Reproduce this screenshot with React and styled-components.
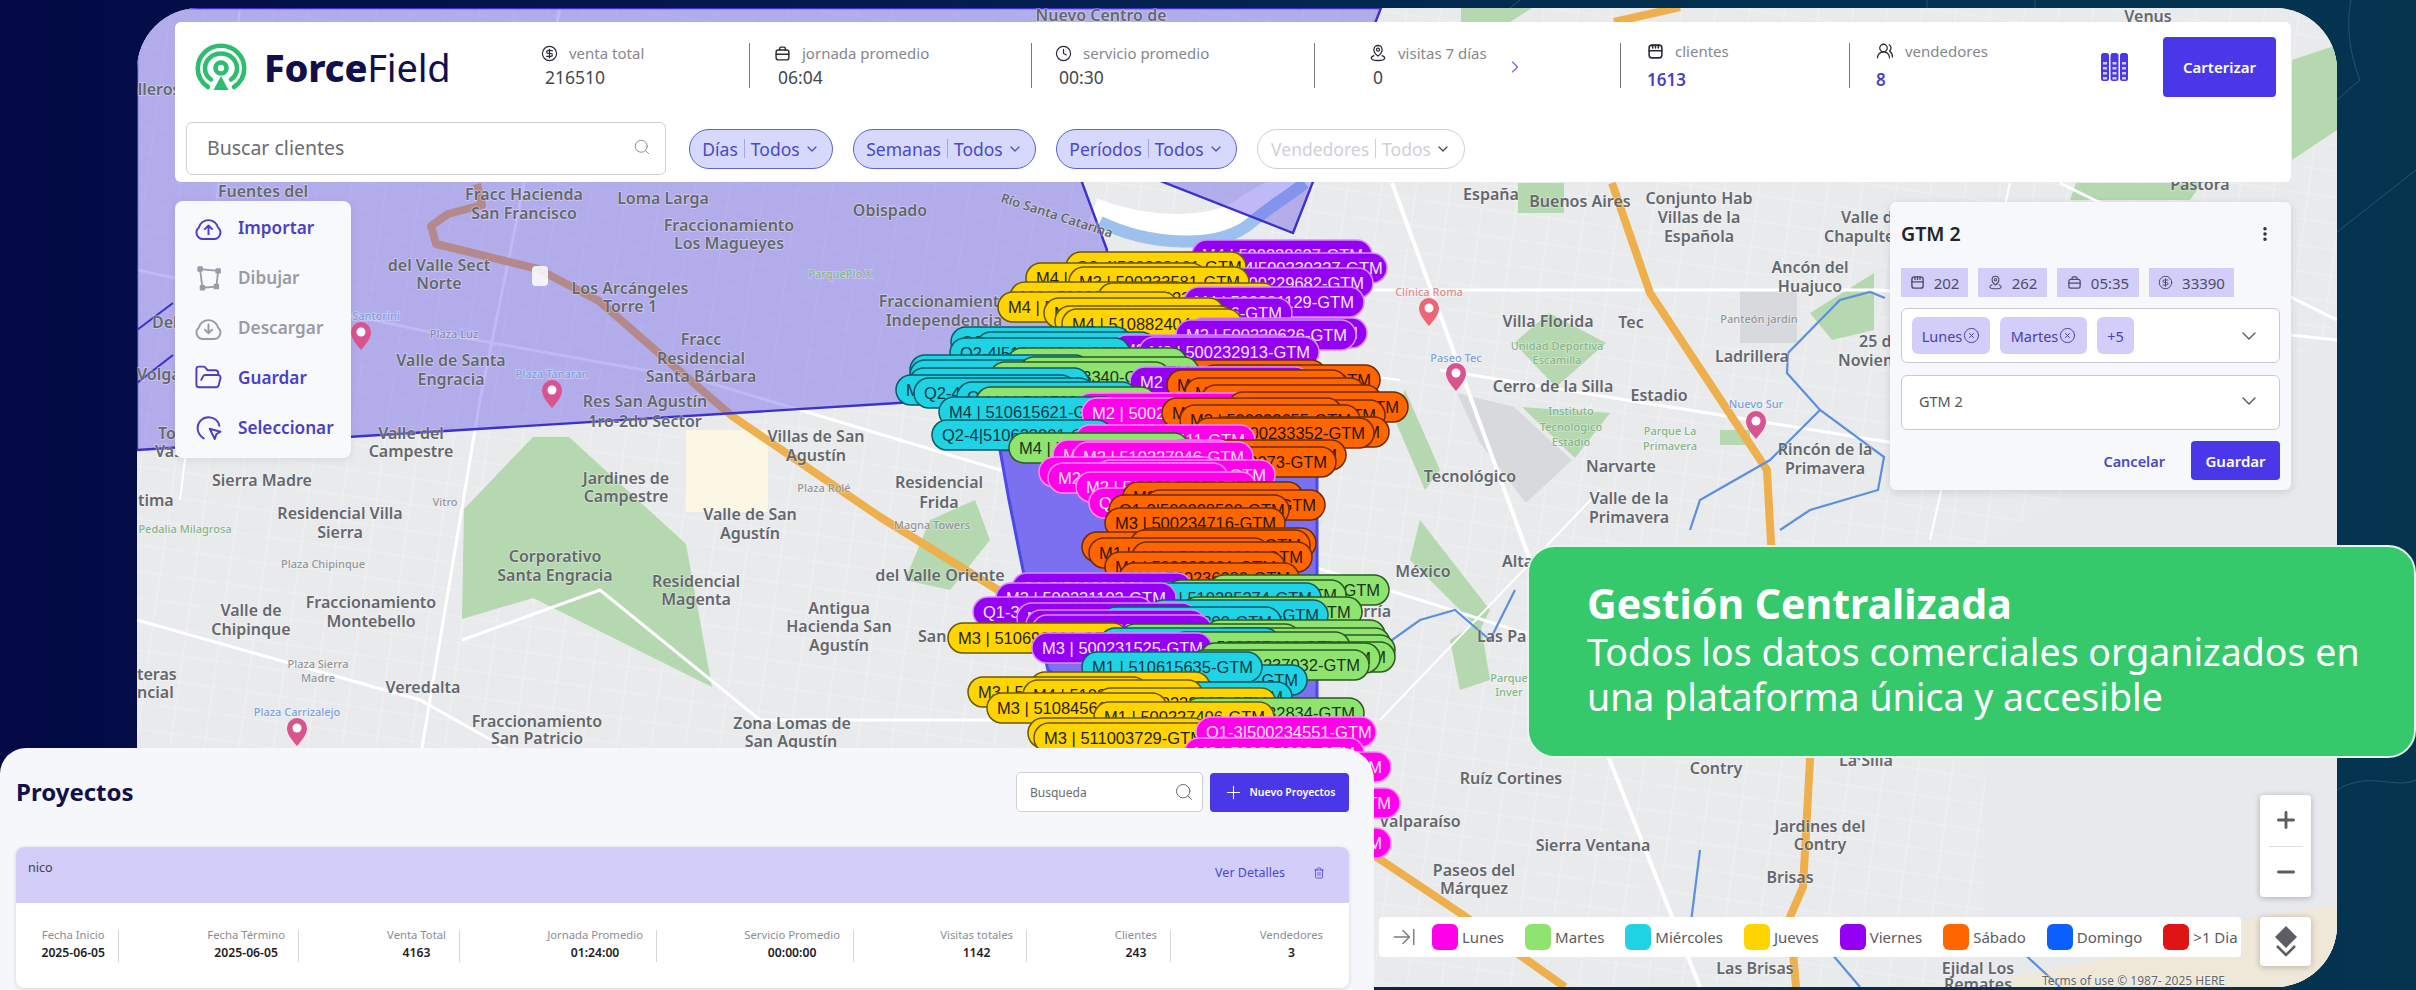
import React from "react";
import styled, { createGlobalStyle } from "styled-components";
import {
  CircleDollarSign, Clock, UsersRound, ChevronDown, ChevronRight, Search, FolderOpen,
  EllipsisVertical, CircleX, Trash2, Plus, Minus, ArrowRightToLine,
} from "lucide-react";

const Global = createGlobalStyle`
  html, body { margin: 0; padding: 0; background: #04244f; }
  body { font-family: "Noto Sans", "Open Sans", sans-serif; }
  * { box-sizing: border-box; }
`;

const VIOLET = "#4a38e8";
const INK = "#12104a";

const Stage = styled.div`
  position: relative; width: 2416px; height: 990px; overflow: hidden;
  background: linear-gradient(90deg, #030a45 0%, #04194f 35%, #03304f 70%, #05344f 100%);
`;
const Deco = styled.svg`position: absolute; inset: 0; width: 2416px; height: 990px;`;
const MapFrame = styled.div`
  position: absolute; left: 137px; top: 8px; width: 2200px; height: 979px;
  border-radius: 62px; overflow: hidden; background: #e9eaec;
`;
const MapSvg = styled.svg`display: block; width: 2200px; height: 979px;`;
const MapLabel = styled.text`
  font-family: "Noto Sans", sans-serif; font-size: ${p => p.$s || 16}px; font-weight: ${p => p.$w || 600};
  fill: ${p => p.$c || "#64676c"}; stroke: rgba(255,255,255,.4); stroke-width: 1.5px; paint-order: stroke;
  text-anchor: ${p => p.$a || "middle"};
`;
const PinText = styled.text`
  font-family: "Liberation Sans", Arial, sans-serif; font-size: 16.5px; fill: ${p => p.$c};
`;

/* header */
const Header = styled.header`
  position: absolute; left: 175px; top: 22px; width: 2116px; height: 160px;
  background: #fff; border-radius: 6px; display: flex; flex-direction: column;
`;
const TopRow = styled.div`display: flex; align-items: flex-start; height: 100px; padding-top: 21px;`;
const LogoBox = styled.div`width: 366px; display: flex; align-items: center; gap: 17px; padding-left: 20px; height: 48px;`;
const LogoText = styled.div`font-size: 38px; line-height: 48px; color: ${INK}; letter-spacing: -0.2px;
  b { font-weight: 800; }`;
const Stat = styled.div`
  width: ${p => p.$w}px; height: 45px; padding-left: ${p => p.$pad}px; position: relative;
  border-left: ${p => p.$first ? "none" : "1.5px solid #77797d"};
`;
const StatLabel = styled.div`
  display: flex; align-items: center; gap: 11px; color: #85878c; font-size: 15px; line-height: 18px;
  margin-top: ${p => p.$accent ? -1 : 1}px; svg { color: #2a2a33; flex: none; }
`;
const StatValue = styled.div`
  font-size: ${p => p.$accent ? 17 : 17.5}px; line-height: 22px; margin-top: ${p => p.$accent ? 9 : 4}px;
  padding-left: ${p => p.$accent ? 0 : 4}px; font-weight: ${p => p.$accent ? 600 : 400};
  color: ${p => p.$accent ? "#4c3fc4" : "#45474c"};
`;
const StatArrow = styled.span`position: absolute; left: 190px; top: 14px; color: #6a68d8; display: flex;`;
const GridBox = styled.div`width: 62px; display: flex; height: 45px; padding-top: 10px;`;
const PrimaryBtn = styled.button`
  border: 0; background: ${VIOLET}; color: #fff; font: 600 ${p => p.$fs || 15}px "Noto Sans", sans-serif; border-radius: 4px;
  width: ${p => p.$w}px; height: ${p => p.$h}px; display: flex; align-items: center; justify-content: center; gap: 5px;
`;
const BtnHolder = styled.div`margin-top: -6px;`;
const BottomRow = styled.div`display: flex; align-items: center; gap: 23px; padding-left: 11px; height: 53px;`;
const SearchBox = styled.div`
  width: 480px; height: 53px; border: 1.5px solid #cfd0d4; border-radius: 6px; background: #fff;
  display: flex; align-items: center; justify-content: space-between; padding: 0 14px 3px 20px;
  color: #6a6c72; font-size: 19.5px; svg { color: #8b8d92; }
`;
const Pills = styled.div`display: flex; gap: 20px;`;
const Pill = styled.div`
  width: ${p => p.$w}px; height: 40px; border-radius: 20px; display: flex; align-items: center; justify-content: center;
  gap: 6px; font-size: 17.5px; border: 1.5px solid ${p => p.$off ? "#cfd0d4" : "#5c5fd8"};
  background: ${p => p.$off ? "#fff" : "#d6d9fc"}; color: ${p => p.$off ? "#cfd0d6" : "#4a48c6"};
  svg { color: ${p => p.$off ? "#44464c" : "#4a48c6"}; margin-left: -2px; }
`;
const Sep = styled.i`width: 1px; height: 19px; background: ${p => p.$off ? "#cfd0d6" : "#a3a5e6"};`;

/* tools */
const Tools = styled.nav`
  position: absolute; left: 175px; top: 201px; width: 176px; height: 257px; padding-top: 2px;
  background: #f8f9fb; border-radius: 8px; box-shadow: 0 2px 8px rgba(0,0,0,.08);
`;
const Tool = styled.div`
  height: 50px; display: flex; align-items: center; gap: 15px; padding-left: 19px; font-size: 17.2px; font-weight: 600;
  color: ${p => p.$off ? "#9a9ba6" : "#4a3fc6"}; padding-bottom: 2px;
`;

/* panel */
const Panel = styled.section`
  position: absolute; left: 1890px; top: 202px; width: 401px; height: 288px; padding: 0 11px;
  background: #f6f8fb; border-radius: 6px; box-shadow: 0 2px 8px rgba(0,0,0,.12);
`;
const PanelHead = styled.div`
  display: flex; align-items: center; justify-content: space-between; height: 66px; padding-bottom: 3px;
  font-size: 19.5px; font-weight: 600; color: #222429; svg { color: #2a2c33; margin-right: 6px; }
`;
const Chips = styled.div`display: flex; gap: 10px;`;
const Chip = styled.div`
  width: ${p => p.$w}px; height: 29px; background: #d3cdf9; display: flex; align-items: center; justify-content: center; gap: 9px;
  font-size: 15px; color: #4c4e68;
`;
const Select = styled.div`
  height: 55px; margin-top: ${p => p.$mt}px; background: #fff; border: 1.5px solid #c9cacf; border-radius: 6px;
  display: flex; align-items: center; justify-content: space-between; padding: 0 18px ${p => p.$pb || 0}px ${p => p.$pl}px;
  font-size: 14.5px; color: #55575e;
`;
const Tags = styled.div`display: flex; gap: 10px;`;
const Tag = styled.div`
  width: ${p => p.$w}px; height: 37px; background: #d3cdf9; border-radius: 6px; display: flex; align-items: center; justify-content: center;
  gap: 1px; font-size: 14.5px; color: #4a42a8;
`;
const PanelFoot = styled.div`display: flex; justify-content: flex-end; align-items: center; gap: 26px; margin-top: 11px;`;
const LinkBtn = styled.span`font-size: 14.5px; font-weight: 600; color: #4a48c6;`;

/* green card */
const Promo = styled.aside`
  position: absolute; left: 1527px; top: 545px; width: 889px; height: 213px; padding: 33px 0 0 58px;
  background: #35c96b; border: 2px solid #e4f7ea; border-radius: 28px; color: #fff;
`;
const PromoTitle = styled.div`font-size: 41px; font-weight: 700; line-height: 46px;`;
const PromoText = styled.div`font-size: 37.5px; font-weight: 400; line-height: 45px; margin-top: 3px;`;

/* map controls */
const ZoomBox = styled.div`
  position: absolute; left: 2260px; top: 795px; width: 51px; height: 102px; background: #fff; border-radius: 4px;
  box-shadow: 0 1px 6px rgba(0,0,0,.25); display: flex; flex-direction: column; align-items: center; color: #5c5e64;
`;
const ZoomCell = styled.div`flex: 1; width: 100%; display: flex; align-items: center; justify-content: center;`;
const ZoomRule = styled.i`width: 34px; height: 1px; background: #dcdde0;`;
const LayerBtn = styled.div`
  position: absolute; left: 2260px; top: 917px; width: 51px; height: 49px; background: #fff; border-radius: 4px;
  box-shadow: 0 1px 6px rgba(0,0,0,.25); display: flex; align-items: center; justify-content: center;
`;
const Legend = styled.div`
  position: absolute; left: 1379px; top: 917px; width: 862px; height: 40px; background: #fff; border-radius: 4px;
  display: flex; align-items: center; padding-left: 12px; font-size: 15px; color: #5a5c62;
`;
const LegendArrow = styled.div`
  display: flex; align-items: center; color: #7a7c80; padding-right: 1px; margin-right: 14px; height: 26px;
`;
const LegendItems = styled.div`display: flex; gap: 21px;`;
const LegendItem = styled.div`display: flex; align-items: center; gap: 4px;`;
const Swatch = styled.i`width: 26px; height: 26px; border-radius: 6px; background: ${p => p.$c};`;

/* projects */
const Projects = styled.section`
  position: absolute; left: 0; top: 748px; width: 1374px; height: 260px; padding: 24px 25px 0 16px;
  background: #f5f7fb; border-radius: 26px 32px 0 0;
`;
const ProjHead = styled.div`display: flex; align-items: center; justify-content: space-between; height: 40px;`;
const ProjTitle = styled.h2`margin: 0; font-size: 24px; font-weight: 700; color: ${INK}; line-height: 44px;`;
const ProjTools = styled.div`display: flex; gap: 7px; align-items: center;`;
const ProjSearch = styled.div`
  width: 187px; height: 40px; background: #fff; border: 1px solid #cfd0d4; border-radius: 5px; display: flex;
  align-items: center; justify-content: space-between; padding: 0 8px 0 13px; font-size: 12px; color: #6a6c72;
  svg { color: #6a6c72; }
`;
const Card = styled.article`
  margin-top: 35px; border-radius: 8px; background: #fff; box-shadow: 0 1px 4px rgba(0,0,0,.14); height: 141px; overflow: hidden;
`;
const CardHead = styled.div`
  height: 56px; background: #d3cdf9; display: flex; align-items: flex-start; justify-content: space-between; padding: 12px 24px 0 12px;
  font-size: 12.5px; color: #3e4050;
`;
const CardLinks = styled.div`display: flex; align-items: center; gap: 28px; margin-top: 5px; color: #4a48d6; svg { color: #5a52d6; }`;
const CardBody = styled.div`
  display: grid; grid-template-columns: 103px 180px 161px 197px 197px 173px 144px 178px; padding-top: 27px;
`;
const Cell = styled.div`
  height: 32px; display: flex; justify-content: flex-end; padding-right: ${p => p.$last ? 26 : 13}px;
  border-right: ${p => p.$last ? "none" : "1px solid #d5d6da"};
`;
const CellInner = styled.div`text-align: center; margin-top: -3px;`;
const CellLabel = styled.div`font-size: 11.3px; line-height: 16px; color: #8b8d93;`;
const CellValue = styled.div`font-size: 12.2px; line-height: 19px; font-weight: 600; color: #1f2026;`;

/* svg icons */
const Ic = ({ s = 16, children, sw = 1.7 }) => (
  <svg width={s} height={s} viewBox="0 0 24 24" fill="none" stroke="currentColor" strokeWidth={sw} strokeLinecap="round" strokeLinejoin="round">{children}</svg>
);
const JornadaIcon = ({ s }) => <Ic s={s} sw={2}><rect x="3" y="7" width="18" height="14" rx="3" /><path d="M3 13h18M8 7V5a2 2 0 0 1 2-2h4a2 2 0 0 1 2 2v2" /></Ic>;
const VisitIcon = ({ s }) => <Ic s={s}><path d="M12 16s-5.5-4-5.5-8.5a5.5 5.5 0 0 1 11 0C17.500 12 12 16 12 16z" /><circle cx="12" cy="7.500" r="2" /><path d="M6.500 15.500C4.500 16.300 3 17.300 3 18.700 3 20.600 7 22 12 22s9-1.400 9-3.300c0-1.400-1.500-2.400-3.500-3.200" /></Ic>;
const ClientIcon = ({ s }) => <Ic s={s} sw={2.2}><rect x="3" y="3" width="18" height="18" rx="4" /><path d="M3 11h18M8 3v4M12 3v4M16 3v4" /></Ic>;
const CloudIcon = ({ down }) => (
  <Ic s={29} sw={1.6}>
    <path d="M7.500 21.500h9a5.300 5.300 0 0 0 3.500-9.300A8.300 8.300 0 0 0 3.900 12.200 5.300 5.300 0 0 0 7.500 21.500z" />
    {down ? <path d="M12 9.500v7M9 13.800l3 3 3-3" /> : <path d="M12 17.500v-7M9 13.300l3-3 3 3" />}
  </Ic>
);
const DrawIcon = () => (
  <Ic s={29} sw={1.5}><path d="M5 5l15 1.500-1.500 13L7 20.500z" /><rect x="3.500" y="3.500" width="3" height="3" fill="currentColor" /><rect x="18.500" y="5" width="3" height="3" fill="currentColor" /><rect x="17" y="18" width="3" height="3" fill="currentColor" /><rect x="5.500" y="19" width="3" height="3" fill="currentColor" /></Ic>
);
const SelectIcon = () => (
  <Ic s={29} sw={1.6}><path d="M8 21C4.800 19 3 16 3 12.500A9 9 0 0 1 12 3.500c4.500 0 8 2.800 9 7" /><path d="M13 13l9 2.500-3.500 2-1.300 4z" /></Ic>
);
const Logo = () => (
  <svg width="52" height="49" viewBox="0 0 52 49" fill="none" stroke="#2dbd6e" strokeWidth="4.600" strokeLinecap="round">
    <path d="M13 44C6.500 39.500 2.800 33 2.800 25.500 2.800 12.800 13.200 2.800 26 2.800s23.200 10 23.200 22.700c0 7.500-3.700 14-10.200 18.500" />
    <path d="M16 36.500c-3.800-2.700-6-6.500-6-11 0-8.400 7.100-15 16-15s16 6.600 16 15c0 4.500-2.200 8.300-6 11" />
    <circle cx="26" cy="25" r="5.500" />
    <path d="M26 33l7.500 14h-15z" fill="#2dbd6e" stroke="none" />
  </svg>
);
const GridIcon = () => (
  <svg width="27" height="28" viewBox="0 0 27 28">
    <rect x="0" y="0" width="8" height="28" rx="2.500" fill={VIOLET} /><rect x="9.500" y="0" width="8" height="28" rx="2.500" fill={VIOLET} /><rect x="19" y="0" width="8" height="28" rx="2.500" fill={VIOLET} />
    {[9, 14, 19, 24].map(y => [2, 11.500, 21].map(x => <rect key={x + "-" + y} x={x} y={y} width="4" height="2.500" fill="#cfcbfa" />))}
  </svg>
);
const LayerIcon = () => (
  <svg width="26" height="36" viewBox="0 0 26 36">
    <path d="M13 2l11 11-11 11L2 13z" fill="#5c5e64" />
    <path d="M4 22l9 9 9-9" fill="none" stroke="#5c5e64" strokeWidth="2.600" />
  </svg>
);

/* map data */
const roads = [
  ["M137 270L420 330L700 380L1000 470L1420 600L1800 720", 3],
  ["M137 620L420 700L740 880", 3],
  ["M560 8L480 400L420 760", 3],
  ["M1392 183L1530 560L1700 987", 4],
  ["M1440 370L2000 460", 3],
  ["M1310 290L1880 290L2337 340", 3],
  ["M1100 340L1400 380", 2],
  ["M2010 183L1930 540", 2],
  ["M462 640L600 590L760 720L1010 720", 3],
  ["M1600 490L1380 720", 2],
  ["M240 8L180 500", 2],
  ["M1860 760L2050 700", 2],
  ["M2060 183L2337 320", 3],
];
const mainRoads = [
  "M477 184L482 205L448 214L431 226L436 244L538 269L599 301L661 355L732 416L880 517L998 590L1180 740L1381 860L1466 917L1565 987",
  "M1612 183L1650 293L1767 470L1771 543L1810 760L1803 887L1790 917L1796 987",
  "M1614 22L1680 7",
];
const parks = [
  "533,437 569,437 686,544 712,687 533,598 462,619 464,509",
  "1549,313 1606,343 1556,387 1514,343",
  "1522,407 1610,413 1575,458",
  "1518,183 1564,183 1564,213 1518,213",
  "1810,313 1874,273 1874,330 1832,340",
  "1461,8 1532,8 1510,22 1461,22",
  "2292,60 2337,45 2337,130 2292,160",
  "2076,183 2202,183 2190,200 2070,200",
  "1720,430 1750,430 1750,445 1720,445",
  "1405,390 1440,470 1425,490 1395,420",
  "1420,520 1490,610 1480,630 1410,560",
  "1850,660 1880,650 1870,690 1840,700",
  "930,520 975,500 990,540 950,590 905,580",
  "150,800 175,790 170,880 150,920",
  "1610,620 1650,590 1640,640",
  "1450,640 1480,620 1490,680 1460,690",
];
const labels = [
  ["Nuevo Centro de", 1101, 21], ["Venus", 2148, 22], ["Pastora", 2200, 190], ["Fuentes del", 263, 197],
  ["Fracc Hacienda", 524, 200], ["San Francisco", 524, 219], ["Loma Larga", 663, 204], ["Obispado", 890, 216],
  ["Fraccionamiento", 729, 231], ["Los Magueyes", 729, 249], ["del Valle Sect", 439, 271], ["Norte", 439, 289],
  ["Los Arcángeles", 630, 294], ["Torre 1", 630, 312], ["Fracc", 701, 345], ["Residencial", 701, 364], ["Santa Bárbara", 701, 382],
  ["Valle de Santa", 451, 366], ["Engracia", 451, 385], ["Res San Agustín", 645, 407], ["1ro-2do Sector", 645, 427],
  ["Valle del", 411, 439], ["Campestre", 411, 457], ["Villas de San", 816, 442], ["Agustín", 816, 461], ["Sierra Madre", 262, 486],
  ["Jardines de", 626, 484], ["Campestre", 626, 502], ["Residencial Villa", 340, 519], ["Sierra", 340, 538], ["Valle de San", 750, 520], ["Agustín", 750, 539],
  ["Corporativo", 555, 562], ["Santa Engracia", 555, 581], ["Residencial", 696, 587], ["Magenta", 696, 605], ["Fraccionamiento", 371, 608], ["Montebello", 371, 627],
  ["Valle de", 251, 616], ["Chipinque", 251, 635], ["Antigua", 839, 614], ["Hacienda San", 839, 632], ["Agustín", 839, 651], ["del Valle Oriente", 940, 581],
  ["Veredalta", 423, 693], ["Fraccionamiento", 537, 727], ["San Patricio", 537, 744], ["Zona Lomas de", 792, 729], ["San Agustín", 791, 747],
  ["Fraccionamiento", 944, 307], ["Independencia", 944, 326], ["Residencial", 939, 488], ["Frida", 939, 508],
  ["España", 1491, 200], ["Buenos Aires", 1580, 207], ["Conjunto Hab", 1699, 204], ["Villas de la", 1699, 223], ["Española", 1699, 242],
  ["Ancón del", 1810, 273], ["Huajuco", 1810, 292], ["Villa Florida", 1548, 327], ["Tec", 1631, 328], ["Ladrillera", 1752, 362], ["Cerro de la Silla", 1553, 392],
  ["Estadio", 1659, 401], ["Tecnológico", 1470, 482], ["Narvarte", 1621, 472], ["Valle de la", 1629, 504], ["Primavera", 1629, 523], ["Rincón de la", 1825, 455], ["Primavera", 1825, 474],
  ["México", 1423, 577], ["Echeverría", 1350, 617], ["Ruíz Cortines", 1511, 784], ["Contry", 1716, 774], ["Valparaíso", 1420, 827], ["Sierra Ventana", 1593, 851],
  ["Paseos del", 1474, 876], ["Márquez", 1474, 894], ["Jardines del", 1820, 832], ["Contry", 1820, 850], ["Brisas", 1790, 883], ["Las Brisas", 1755, 974], ["Ejidal Los", 1978, 974], ["Remates", 1978, 990],
  ["La Silla", 1866, 766],
];
const startLabels = [
  ["Chapultepec", 1824, 242], ["Valle de", 1841, 223], ["25 de", 1859, 347], ["Noviembre", 1838, 366], ["Las Palmas", 1477, 642], ["Alta", 1502, 567],
  ["Cavalleros", 100, 95], ["Del", 152, 328], ["Volga", 137, 380], ["To", 158, 439], ["Vasconcelos", 155, 457], ["Fátima", 120, 506], ["teras", 137, 680], ["ncial", 137, 698], ["San", 918, 642],
];
const smalls = [
  ["Plaza Luz", 454, 338, "#8a88b0"], ["Plaza Tanaran", 552, 378, "#7d9fe0"], ["Santorini", 376, 320, "#7d9fe0"], ["Plaza Sierra", 318, 668, "#93959a"], ["Madre", 318, 682, "#93959a"],
  ["Plaza Chipinque", 323, 568, "#93959a"], ["Plaza Carrizalejo", 297, 716, "#7d9fe0"], ["Plaza Rolé", 824, 492, "#93959a"], ["Magna Towers", 932, 529, "#93959a"], ["Vitro", 445, 506, "#93959a"],
  ["ParquePlo X", 840, 278, "#86b58a"], ["Unidad Deportiva", 1557, 350, "#86b58a"], ["Escamilla", 1557, 364, "#86b58a"], ["Instituto", 1571, 415, "#86b58a"], ["Tecnológico", 1571, 431, "#86b58a"], ["Estadio", 1571, 446, "#86b58a"],
  ["Parque La", 1670, 435, "#86b58a"], ["Primavera", 1670, 450, "#86b58a"], ["Panteón jardín", 1759, 323, "#93959a"], ["Clínica Roma", 1429, 296, "#e28a90"], ["Paseo Tec", 1456, 362, "#7d9fe0"], ["Nuevo Sur", 1756, 408, "#7d9fe0"],
  ["Parque", 1509, 682, "#86b58a"], ["Inver", 1509, 696, "#86b58a"], ["Pedalia Milagrosa", 185, 533, "#86b58a"],
];
const pins = [[361, 336, "#d9548f"], [552, 394, "#d9548f"], [297, 732, "#d9548f"], [1429, 312, "#ee6676"], [1456, 377, "#d9548f"], [1756, 425, "#d9548f"]];

const C = {
  y: ["#ffd400", "#6a5800", "#26230a"], p: ["#9400f2", "#d88cff", "#f6e6ff"], m: ["#ff00ea", "#ff8cf5", "#ffe6fb"],
  t: ["#1fd2e4", "#0b5a66", "#0d3a44"], g: ["#8fe36f", "#2a5a20", "#17351a"], o: ["#ff6600", "#6e2a00", "#2a1400"],
};
const markers = [
  ["p", 1192, 240, "M4 | 500238627-GTM"], ["p", 1207, 253, "Q2-4|500230327-GTM"], ["y", 1066, 252, "Q2-4|500238161-GTM"], ["p", 1193, 268, "M4 | 500229682-GTM"],
  ["y", 1026, 263, "M4 | 500239081-GTM"], ["y", 1069, 267, "M3 | 500233581-GTM"], ["y", 1010, 282, "M4 | 500231144-GTM"], ["y", 1098, 283, "M4 | 500231902-GTM"],
  ["p", 1184, 287, "M4 | 500231129-GTM"], ["p", 1112, 298, "M4 | 500232116-GTM"], ["y", 998, 292, "M4 | 510882001-GTM"], ["y", 1044, 298, "M4 | 510882112-GTM"],
  ["y", 1055, 306, "M4 | 510882233-GTM"], ["y", 1062, 309, "M4 | 510882404-GTM"], ["p", 1187, 318, "M2 | 500229012-GTM"], ["p", 1176, 320, "M2 | 500229626-GTM"],
  ["t", 951, 327, "Q2-4|510620112-GTM"], ["t", 976, 332, "Q2-4|510620300-GTM"], ["p", 1112, 335, "M2 | 500232001-GTM"], ["t", 950, 338, "Q2-4|510621560-GTM"],
  ["p", 1139, 337, "M2 | 500232913-GTM"], ["g", 1007, 348, "M4 | 510733001-GTM"], ["o", 1146, 360, "M2 | 500233012-GTM"], ["t", 910, 355, "M4 | 510612001-GTM"],
  ["t", 910, 360, "M4 | 510612099-GTM"], ["g", 1019, 357, "M4 | 510733102-GTM"], ["g", 990, 362, "M4 | 510733340-GTM"], ["o", 1200, 365, "M2 | 500233104-GTM"], ["t", 909, 368, "M4 | 510612233-GTM"],
  ["t", 896, 375, "M4 | 510612441-GTM"], ["p", 1130, 367, "M2 | 500232450-GTM"], ["o", 1167, 370, "M2 | 500233288-GTM"], ["o", 1185, 378, "M2 | 500233301-GTM"],
  ["t", 914, 378, "Q2-4|510622011-GTM"], ["t", 957, 382, "Q2-4|510622405-GTM"], ["g", 976, 387, "M4 | 510733455-GTM"], ["o", 1201, 385, "M3 | 500233400-GTM"],
  ["m", 1076, 393, "M2 | 500231121-GTM"], ["o", 1228, 392, "M3 | 500233421-GTM"], ["o", 1205, 400, "M3 | 500233498-GTM"], ["t", 939, 397, "M4 | 510615621-GTM"],
  ["m", 1082, 398, "M2 | 500231250-GTM"], ["o", 1162, 398, "M3 | 500233510-GTM"], ["o", 1180, 405, "M3 | 500233655-GTM"], ["o", 1209, 417, "M3 | 500233701-GTM"],
  ["o", 1194, 418, "M4 | 500233352-GTM"], ["t", 932, 420, "Q2-4|510623001-GTM"], ["m", 1075, 425, "M2 | 500231411-GTM"], ["g", 1009, 433, "M4 | 510733560-GTM"],
  ["o", 1166, 440, "M3 | 500228012-GTM"], ["o", 1156, 447, "M3 | 500228073-GTM"], ["m", 1053, 440, "M2 | 510227001-GTM"], ["m", 1073, 442, "M2 | 510227046-GTM"],
  ["m", 1039, 457, "Q1-3|510227080-GTM"], ["m", 1095, 460, "M2 | 510227099-GTM"], ["m", 1048, 463, "M2 | 510227120-GTM"], ["m", 1076, 472, "M2 | 510227146-GTM"],
  ["m", 1089, 488, "Q1-3|510227300-GTM"], ["o", 1123, 482, "M3 | 500228400-GTM"], ["o", 1145, 490, "M3 | 500228455-GTM"], ["o", 1109, 495, "Q1-3|500228590-GTM"],
  ["o", 1105, 508, "M3 | 500234716-GTM"], ["o", 1136, 528, "M1 | 500236001-GTM"], ["o", 1082, 532, "M1 | 500236020-GTM"], ["o", 1130, 530, "M1 | 500236040-GTM"],
  ["o", 1089, 538, "M1 | 500236066-GTM"], ["o", 1132, 542, "M1 | 500236091-GTM"], ["o", 1105, 552, "M1 | 500228001-GTM"], ["o", 1119, 563, "M1 | 500236080-GTM"],
  ["g", 1209, 575, "M1 | 500237001-GTM"], ["p", 1012, 573, "Q1-3|500231001-GTM"], ["g", 1166, 580, "M1 | 500237010-GTM"], ["t", 1141, 583, "M1 | 510285274-GTM"],
  ["p", 996, 583, "M3 | 500231102-GTM"], ["g", 1182, 597, "M1 | 500237111-GTM"], ["t", 1148, 600, "M1 | 510285290-GTM"], ["p", 973, 597, "Q1-3|500231180-GTM"],
  ["p", 1017, 603, "M3 | 500231200-GTM"], ["t", 1101, 607, "M1 | 510285300-GTM"], ["p", 1026, 610, "M3 | 500231222-GTM"], ["p", 1032, 615, "M3 | 500222075-GTM"],
  ["y", 948, 623, "M3 | 510690001-GTM"], ["g", 1205, 620, "M1 | 500237200-GTM"], ["g", 1120, 624, "M1 | 500237222-GTM"], ["g", 1210, 628, "M1 | 500237300-GTM"], ["t", 1100, 628, "M1 | 510615500-GTM"],
  ["g", 1215, 635, "M1 | 500237400-GTM"], ["g", 1170, 632, "M1 | 500237444-GTM"], ["p", 1032, 633, "M3 | 500231525-GTM"], ["g", 1215, 642, "M1 | 500237500-GTM"], ["g", 1200, 643, "M1 | 500237600-GTM"],
  ["g", 1189, 650, "M1 | 500237032-GTM"], ["t", 1127, 665, "M1 | 510285317-GTM"], ["t", 1082, 652, "M1 | 510615635-GTM"], ["y", 1030, 672, "M4 | 510800123-GTM"], ["y", 968, 677, "M3 | 510845011-GTM"],
  ["t", 1112, 682, "M1 | 510615700-GTM"], ["y", 1023, 680, "M4 | 510800456-GTM"], ["y", 1096, 688, "M4 | 500223007-GTM"], ["g", 1184, 698, "M1 | 500232834-GTM"], ["y", 987, 693, "M3 | 510845612-GTM"],
  ["y", 1094, 702, "M1 | 500227406-GTM"], ["y", 1028, 718, "M3 | 511003600-GTM"], ["y", 1034, 723, "M3 | 511003729-GTM"], ["m", 1196, 717, "Q1-3|500234551-GTM"],
  ["m", 1184, 738, "M2 | 500234600-GTM"], ["m", 1211, 752, "M2 | 500234650-GTM"], ["m", 1220, 788, "M2 | 500234700-GTM"], ["m", 1211, 828, "M2 | 500234750-GTM"],
];

const MapCanvas = () => (
  <MapSvg viewBox="137 8 2200 979">
    <defs>
      <pattern id="st" width="34" height="26" patternUnits="userSpaceOnUse" patternTransform="rotate(8)">
        <path d="M0 0H34M0 0V26" stroke="#fff" strokeOpacity=".5" strokeWidth="1.200" fill="none" />
      </pattern>
    </defs>
    <rect x="137" y="8" width="2200" height="979" fill="#e9eaec" />
    <rect x="137" y="8" width="2200" height="979" fill="url(#st)" />
    <polygon points="1985,545 2337,330 2337,987 1985,987" fill="#e8e9ed" />
    <polygon points="2008,977 2100,960 2193,927 2337,905 2337,987 2008,987" fill="#efe7d8" />
    <polygon points="1457,393 1514,407 1572,460 1526,503 1480,443" fill="#d8d9dc" />
    <rect x="1740" y="290" width="57" height="53" fill="#d8d9dc" />
    <rect x="686" y="430" width="82" height="82" fill="#fbf7e4" />
    {parks.map((p, i) => <polygon key={i} points={p} fill="#b5d8b0" />)}
    <path d="M1093 210C1150 232 1220 232 1250 205C1270 192 1290 185 1310 176" fill="none" stroke="#fff" strokeWidth="24" />
    <path d="M1100 222C1150 246 1220 250 1252 222C1272 205 1290 195 1305 183" fill="none" stroke="#9dc0ec" strokeWidth="12" />
    {roads.map(([d, w], i) => <path key={i} d={d} fill="none" stroke="#fff" strokeWidth={w || 1} />)}
    {mainRoads.map((d, i) => <path key={i} d={d} fill="none" stroke="#edb04c" strokeWidth="8" strokeLinejoin="round" />)}
    <path d="M1788 353L1787 373L1820 410L1884 457L1878 490L1810 510L1780 530M1820 410L1770 460L1700 500L1690 530M1788 353L1840 300L1870 292L1885 298" fill="none" stroke="#5c90dc" strokeWidth="2.200" />
    <path d="M1350 670L1420 620L1455 610L1490 640L1515 590M1825 725L1860 760M1700 850L1690 930M1820 940L1860 987M2020 950L2060 987" fill="none" stroke="#5c90dc" strokeWidth="2.200" />
    <polygon points="137,8 1381,8 1293,233 1150,177 1080,177 1107,250 1090,390 898,403 137,450" fill="rgba(96,80,235,.40)" stroke="#3d31c8" strokeWidth="2.400" />
    <path d="M137 330L173 303M137 383L173 355" fill="none" stroke="#3d31c8" strokeWidth="2" />
    <polygon points="1000,450 1009,500 1023,570 1048,670 1140,720 1317,720 1317,450" fill="#7a70f0" stroke="#4b4ae8" strokeWidth="3" />
    {labels.map(([t, x, y], i) => <MapLabel key={i} x={x} y={y}>{t}</MapLabel>)}
    {startLabels.map(([t, x, y], i) => <MapLabel key={i} x={x} y={y} $a="start">{t}</MapLabel>)}
    {smalls.map(([t, x, y, c], i) => <MapLabel key={i} x={x} y={y} $s={11} $w={500} $c={c}>{t}</MapLabel>)}
    <MapLabel x={1057} y={220} $s={13} transform="rotate(18 1057 215)">Río Santa Catarina</MapLabel>
    <MapLabel x={2042} y={985} $s={12} $w={400} $a="start">Terms of use     © 1987- 2025 HERE</MapLabel>
    {pins.map(([x, y, c], i) => (
      <g key={i} transform={`translate(${x} ${y})`}>
        <path d="M0 14C-6 7-10 2-10-4a10 10 0 0 1 20 0c0 6-4 11-10 18z" fill={c} />
        <circle cy="-4" r="4.500" fill="#fff" />
      </g>
    ))}
    <rect x="532" y="266" width="16" height="20" rx="4" fill="#fff" opacity=".85" />
    {markers.map(([k, x, y, t], i) => {
      const [f, s, c] = C[k];
      return (
        <g key={i}>
          <rect x={x} y={y} width="180" height="30" rx="15" fill={f} stroke={s} strokeWidth="1.500" />
          <PinText x={x + 10} y={y + 21} $c={c}>{t}</PinText>
        </g>
      );
    })}
  </MapSvg>
);

const stats = [
  { w: 208, pad: 0, first: true, label: "venta total", value: "216510", icon: <CircleDollarSign size={17} strokeWidth={1.7} /> },
  { w: 282, pad: 24, label: "jornada promedio", value: "06:04", icon: <JornadaIcon s={17} /> },
  { w: 283, pad: 23, label: "servicio promedio", value: "00:30", icon: <Clock size={17} strokeWidth={1.7} /> },
  { w: 306, pad: 54, label: "visitas 7 días", value: "0", icon: <VisitIcon s={18} />, arrow: true },
  { w: 229, pad: 26, label: "clientes", value: "1613", accent: true, icon: <ClientIcon s={17} /> },
  { w: 252, pad: 26, label: "vendedores", value: "8", accent: true, icon: <UsersRound size={18} strokeWidth={1.7} /> },
];
const filters = [["Días", 144], ["Semanas", 183], ["Períodos", 181], ["Vendedores", 208, true]];
const tools = [
  ["Importar", <CloudIcon />], ["Dibujar", <DrawIcon />, true], ["Descargar", <CloudIcon down />, true],
  ["Guardar", <FolderOpen size={29} strokeWidth={1.6} />], ["Seleccionar", <SelectIcon />],
];
const legend = [
  ["Lunes", "#ff00ea"], ["Martes", "#8fe36f"], ["Miércoles", "#1fd2e4"], ["Jueves", "#ffd400"],
  ["Viernes", "#9400f2"], ["Sábado", "#ff6600"], ["Domingo", "#0a60ff"], [">1 Dia", "#e01414"],
];
const cols = [
  ["Fecha Inicio", "2025-06-05"], ["Fecha Término", "2025-06-05"], ["Venta Total", "4163"], ["Jornada Promedio", "01:24:00"],
  ["Servicio Promedio", "00:00:00"], ["Visitas totales", "1142"], ["Clientes", "243"], ["Vendedores", "3"],
];

export default function App() {
  return (
    <Stage>
      <Global />
      <Deco viewBox="0 0 2416 990" fill="none" stroke="#1e5670" strokeWidth="1">
        <path d="M2351 0C2345 30 2352 60 2360 80L2337 100M2337 232L2416 170M1927 0V8M2035 0V8M1520 0L1510 8M2337 790C2370 770 2395 790 2416 780" />
      </Deco>
      <MapFrame><MapCanvas /></MapFrame>

      <Header>
        <TopRow>
          <LogoBox><Logo /><LogoText><b>Force</b>Field</LogoText></LogoBox>
          {stats.map(s => (
            <Stat key={s.label} $w={s.w} $pad={s.pad} $first={s.first}>
              <StatLabel $accent={s.accent}>{s.icon}{s.label}</StatLabel>
              <StatValue $accent={s.accent}>{s.value}</StatValue>
              {s.arrow && <StatArrow><ChevronRight size={20} strokeWidth={1.4} /></StatArrow>}
            </Stat>
          ))}
          <GridBox><GridIcon /></GridBox>
          <BtnHolder><PrimaryBtn $w={113} $h={60}>Carterizar</PrimaryBtn></BtnHolder>
        </TopRow>
        <BottomRow>
          <SearchBox>Buscar clientes<Search size={18} strokeWidth={1.3} /></SearchBox>
          <Pills>
            {filters.map(([n, w, off]) => (
              <Pill key={n} $w={w} $off={off}>{n}<Sep $off={off} />Todos<ChevronDown size={16} strokeWidth={1.8} /></Pill>
            ))}
          </Pills>
        </BottomRow>
      </Header>

      <Tools>
        {tools.map(([t, ic, off]) => <Tool key={t} $off={off}>{ic}{t}</Tool>)}
      </Tools>

      <Panel>
        <PanelHead>GTM 2<EllipsisVertical size={18} strokeWidth={2.6} /></PanelHead>
        <Chips>
          <Chip $w={67}><ClientIcon s={15} />202</Chip>
          <Chip $w={69}><VisitIcon s={15} />262</Chip>
          <Chip $w={82}><JornadaIcon s={15} />05:35</Chip>
          <Chip $w={85}><CircleDollarSign size={15} strokeWidth={1.6} />33390</Chip>
        </Chips>
        <Select $mt={11} $pl={10}>
          <Tags>
            <Tag $w={78}>Lunes<CircleX size={17} strokeWidth={1.4} /></Tag>
            <Tag $w={87}>Martes<CircleX size={17} strokeWidth={1.4} /></Tag>
            <Tag $w={37}>+5</Tag>
          </Tags>
          <ChevronDown size={24} strokeWidth={1.4} />
        </Select>
        <Select $mt={12} $pl={17} $pb={4}>GTM 2<ChevronDown size={24} strokeWidth={1.4} /></Select>
        <PanelFoot>
          <LinkBtn>Cancelar</LinkBtn>
          <PrimaryBtn $w={89} $h={39}>Guardar</PrimaryBtn>
        </PanelFoot>
      </Panel>

      <Promo>
        <PromoTitle>Gestión Centralizada</PromoTitle>
        <PromoText>Todos los datos comerciales organizados en<br />una plataforma única y accesible</PromoText>
      </Promo>

      <ZoomBox>
        <ZoomCell><Plus size={26} strokeWidth={2.6} /></ZoomCell>
        <ZoomRule />
        <ZoomCell><Minus size={26} strokeWidth={2.6} /></ZoomCell>
      </ZoomBox>
      <LayerBtn><LayerIcon /></LayerBtn>

      <Legend>
        <LegendArrow><ArrowRightToLine size={26} strokeWidth={1.3} /></LegendArrow>
        <LegendItems>
          {legend.map(([n, c]) => <LegendItem key={n}><Swatch $c={c} />{n}</LegendItem>)}
        </LegendItems>
      </Legend>

      <Projects>
        <ProjHead>
          <ProjTitle>Proyectos</ProjTitle>
          <ProjTools>
            <ProjSearch>Busqueda<Search size={20} strokeWidth={1.2} /></ProjSearch>
            <PrimaryBtn $w={139} $h={39} $fs={10.5}><Plus size={21} strokeWidth={1.2} />Nuevo Proyectos</PrimaryBtn>
          </ProjTools>
        </ProjHead>
        <Card>
          <CardHead>nico<CardLinks>Ver Detalles<Trash2 size={12} strokeWidth={1.8} /></CardLinks></CardHead>
          <CardBody>
            {cols.map(([l, v], i) => (
              <Cell key={l} $last={i === cols.length - 1}>
                <CellInner><CellLabel>{l}</CellLabel><CellValue>{v}</CellValue></CellInner>
              </Cell>
            ))}
          </CardBody>
        </Card>
      </Projects>
    </Stage>
  );
}
